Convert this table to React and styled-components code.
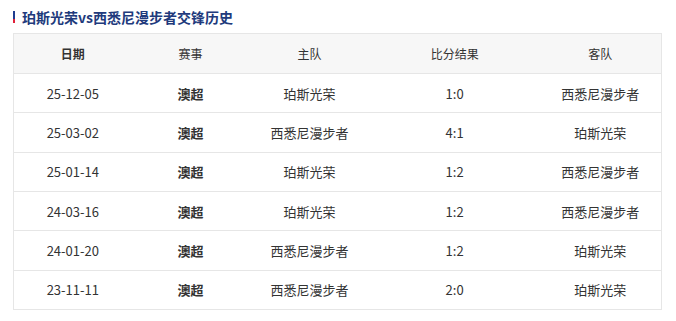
import React from "react";
import styled, { createGlobalStyle } from "styled-components";

const GlobalStyle = createGlobalStyle`
  body {
    margin: 0;
    background: #fff;
    font-family: "Noto Sans CJK SC", "Noto Sans", sans-serif;
    color: #333;
  }
`;

const columns = [
  { key: "date", title: "日期", width: 118, bold: true },
  { key: "league", title: "赛事", width: 118 },
  { key: "home", title: "主队", width: 121 },
  { key: "score", title: "比分结果", width: 170 },
  { key: "away", title: "客队", width: 122 },
];

const matches = [
  { date: "25-12-05", league: "澳超", home: "珀斯光荣", score: "1:0", away: "西悉尼漫步者" },
  { date: "25-03-02", league: "澳超", home: "西悉尼漫步者", score: "4:1", away: "珀斯光荣" },
  { date: "25-01-14", league: "澳超", home: "珀斯光荣", score: "1:2", away: "西悉尼漫步者" },
  { date: "24-03-16", league: "澳超", home: "珀斯光荣", score: "1:2", away: "西悉尼漫步者" },
  { date: "24-01-20", league: "澳超", home: "西悉尼漫步者", score: "1:2", away: "珀斯光荣" },
  { date: "23-11-11", league: "澳超", home: "西悉尼漫步者", score: "2:0", away: "珀斯光荣" },
];

const App = () => {
  return (
    <React.Fragment>
      <GlobalStyle />
      <Wrap>
        <TitleRow>
          <TitleBar />
          <Title>珀斯光荣vs西悉尼漫步者交锋历史</Title>
        </TitleRow>
        <Table>
          <HeadRow>
            {columns.map((c) => (
              <HeadCell key={c.key} $w={c.width} $bold={c.bold}>
                {c.title}
              </HeadCell>
            ))}
          </HeadRow>
          {matches.map((m, idx) => (
            <Row key={idx}>
              {columns.map((c) => (
                <Cell key={c.key} $w={c.width} $bold={c.key === "league"}>
                  {m[c.key]}
                </Cell>
              ))}
            </Row>
          ))}
        </Table>
      </Wrap>
    </React.Fragment>
  );
};

const Wrap = styled.div`
  width: 649px;
  padding: 10px 0 0 13px;
`;

const TitleRow = styled.div`
  height: 13px;
  display: flex;
  align-items: center;
  margin-bottom: 10px;
`;

const TitleBar = styled.div`
  width: 2px;
  height: 12px;
  margin-top: 1px;
  background: linear-gradient(to bottom, #1f3d8f 0, #1f3d8f 65%, #e0203a 65%, #e0203a 100%);
`;

const Title = styled.div`
  margin-left: 7px;
  font-size: 14px;
  font-weight: bold;
  color: #213a7c;
  line-height: 14px;
`;

const Table = styled.div`
  border: 1px solid #e6e6e6;
  border-bottom: none;
  box-sizing: border-box;
`;

const HeadRow = styled.div`
  display: flex;
  height: 40px;
  background: #f7f7f7;
  border-bottom: 1px solid #e6e6e6;
  box-sizing: border-box;
`;

const HeadCell = styled.div`
  width: ${(p) => p.$w}px;
  display: flex;
  align-items: center;
  justify-content: center;
  font-size: 12px;
  font-weight: ${(p) => (p.$bold ? "bold" : "normal")};
  color: #333;
`;

const Row = styled.div`
  display: flex;
  height: 39.33px;
  border-bottom: 1px solid #e6e6e6;
  box-sizing: border-box;
`;

const Cell = styled.div`
  width: ${(p) => p.$w}px;
  display: flex;
  align-items: center;
  justify-content: center;
  font-size: 13px;
  font-weight: ${(p) => (p.$bold ? "bold" : "normal")};
  color: #333;
`;

export default App;
